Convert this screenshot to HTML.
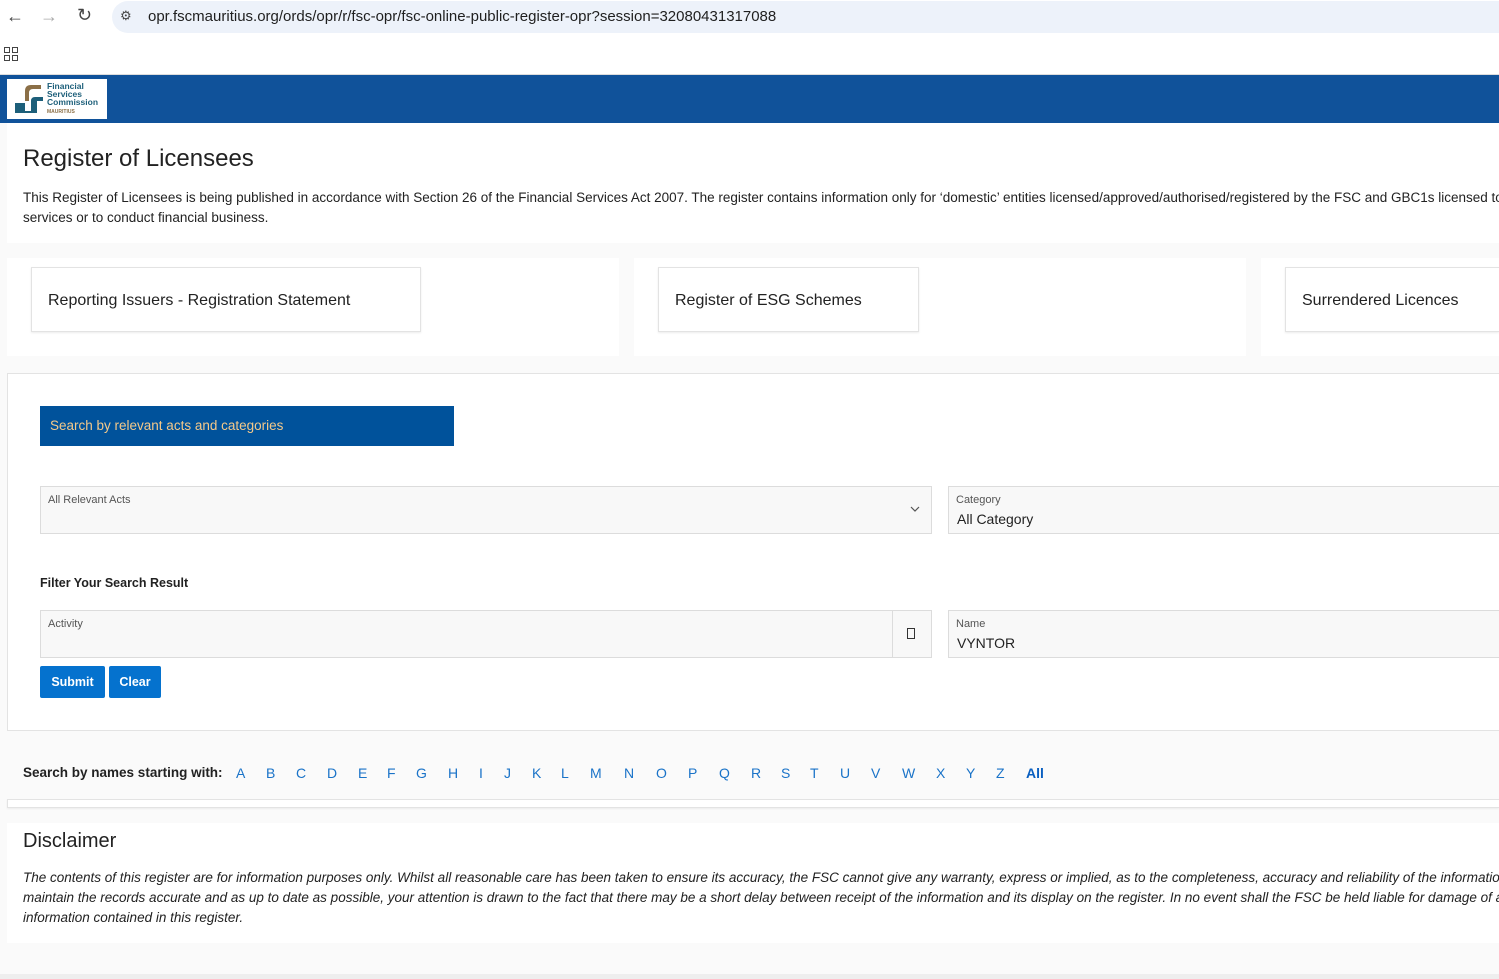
<!DOCTYPE html>
<html><head><meta charset="utf-8"><style>
*{box-sizing:border-box;margin:0;padding:0}
html,body{width:1499px;height:979px;overflow:hidden}
body{background:#fafafa;font-family:"Liberation Sans",sans-serif;color:#222}
#w{position:relative;width:1499px;height:979px;overflow:hidden}
.a{position:absolute}
.chrome{left:0;top:0;width:1499px;height:75px;background:#fff;border-bottom:1px solid #ddd}
.url{left:112px;top:1px;width:1387px;height:32px;background:#edf2fa;border-radius:16px 0 0 16px}
.urltxt{left:148px;top:8px;font-size:15px;color:#1f1f1f}
.hdr{left:0;top:75px;width:1499px;height:48px;background:#10529a}
.logo{left:7px;top:79px;width:100px;height:40px;background:#fff}
.panel{background:#fff}
.card{background:#fff;border:1px solid #e3e3e3;box-shadow:0 1px 2px rgba(0,0,0,.08);font-size:16px;color:#222;padding:24px 16px;white-space:nowrap;overflow:hidden}
.field{background:#f8f8f8;border:1px solid #dcdcdc}
.lbl{font-size:11px;color:#555}
.btn{background:#0572ce;color:#fff;font-weight:bold;font-size:12.5px;text-align:center;line-height:32px;border-radius:2px}
.ltr{top:765px;font-size:14px;color:#1a73c8}
.clip{overflow:hidden;white-space:nowrap}
</style></head><body><div id="w">
<div class="a chrome"></div>
<div class="a url"></div>
<div class="a" style="left:6px;top:6px;font-size:18px;color:#444">←</div>
<div class="a" style="left:40px;top:6px;font-size:18px;color:#aaa">→</div>
<div class="a" style="left:77px;top:5px;font-size:18px;color:#444">↻</div>
<div class="a" style="left:120px;top:8px;font-size:13px;color:#444">⚙</div>
<div class="a urltxt">opr.fscmauritius.org/ords/opr/r/fsc-opr/fsc-online-public-register-opr?session=32080431317088</div>
<svg class="a" style="left:4px;top:47px" width="14" height="14"><rect x="0.5" y="0.5" width="5" height="5" fill="none" stroke="#444"/><rect x="8.5" y="0.5" width="5" height="5" fill="none" stroke="#444"/><rect x="0.5" y="8.5" width="5" height="5" fill="none" stroke="#444"/><rect x="8.5" y="8.5" width="5" height="5" fill="none" stroke="#444"/></svg>
<div class="a hdr"></div>
<div class="a logo">
<svg width="34" height="36" style="position:absolute;left:6px;top:2px"><path d="M4 20h8v-10q0-6 6-6h10v4h-8q-4 0-4 4v8h-4" fill="#8b6f47"/><path d="M2 22h10v8h6v-10q0-4 4-4h8v4h-6v12h-22z" fill="#1d5f7a"/></svg>
<div style="position:absolute;left:40px;top:3px;font-size:8.5px;line-height:8px;color:#1d5f7a;font-weight:bold">Financial<br>Services<br>Commission</div>
<div style="position:absolute;left:40px;top:30px;font-size:5px;color:#8b6f47;font-weight:bold">MAURITIUS</div>
</div>
<div class="a panel" style="left:7px;top:123px;width:1492px;height:120px"></div>
<div class="a" style="left:23px;top:145px;font-size:24px;color:#222">Register of Licensees</div>
<div class="a clip" style="left:23px;top:188px;width:1476px;font-size:13.5px;line-height:20px;color:#222">This Register of Licensees is being published in accordance with Section 26 of the Financial Services Act 2007. The register contains information only for ‘domestic’ entities licensed/approved/authorised/registered by the FSC and GBC1s licensed to conduct<br>services or to conduct financial business.</div>
<div class="a panel" style="left:7px;top:258px;width:612px;height:98px"></div>
<div class="a panel" style="left:634px;top:258px;width:612px;height:98px"></div>
<div class="a panel" style="left:1261px;top:258px;width:238px;height:98px"></div>
<div class="a card" style="left:31px;top:267px;width:390px;height:65px">Reporting Issuers - Registration Statement</div>
<div class="a card" style="left:658px;top:267px;width:261px;height:65px">Register of ESG Schemes</div>
<div class="a card" style="left:1285px;top:267px;width:214px;height:65px;border-right:none">Surrendered Licences</div>
<div class="a panel" style="left:7px;top:373px;width:1492px;height:358px;border:1px solid #e3e3e3;border-right:none"></div>
<div class="a" style="left:40px;top:406px;width:414px;height:40px;background:#00529b;color:#f4c98a;font-size:13.5px;line-height:40px;padding-left:10px">Search by relevant acts and categories</div>
<div class="a field" style="left:40px;top:486px;width:892px;height:48px"></div>
<div class="a lbl" style="left:48px;top:494px">All Relevant Acts</div>
<svg class="a" style="left:910px;top:506px" width="10" height="7"><path d="M1 1l4 4 4-4" fill="none" stroke="#555" stroke-width="1.2"/></svg>
<div class="a field" style="left:948px;top:486px;width:551px;height:48px;border-right:none"></div>
<div class="a lbl" style="left:956px;top:494px">Category</div>
<div class="a" style="left:957px;top:511px;font-size:14px">All Category</div>
<div class="a" style="left:40px;top:576px;font-size:12.5px;font-weight:bold;color:#222">Filter Your Search Result</div>
<div class="a field" style="left:40px;top:610px;width:892px;height:48px"></div>
<div class="a" style="left:892px;top:610px;width:1px;height:48px;background:#dcdcdc"></div>
<div class="a" style="left:907px;top:628px;width:8px;height:11px;border:1px solid #333"></div>
<div class="a lbl" style="left:48px;top:618px">Activity</div>
<div class="a field" style="left:948px;top:610px;width:551px;height:48px;border-right:none"></div>
<div class="a lbl" style="left:956px;top:618px">Name</div>
<div class="a" style="left:957px;top:635px;font-size:14px">VYNTOR</div>
<div class="a btn" style="left:40px;top:666px;width:65px;height:32px">Submit</div>
<div class="a btn" style="left:109px;top:666px;width:52px;height:32px">Clear</div>
<div class="a" style="left:23px;top:765px;font-size:13.5px;font-weight:bold">Search by names starting with:</div>
<div class="a ltr" style="left:236px">A</div><div class="a ltr" style="left:266px">B</div><div class="a ltr" style="left:296px">C</div><div class="a ltr" style="left:327px">D</div><div class="a ltr" style="left:358px">E</div><div class="a ltr" style="left:387px">F</div><div class="a ltr" style="left:416px">G</div><div class="a ltr" style="left:448px">H</div><div class="a ltr" style="left:479px">I</div><div class="a ltr" style="left:504px">J</div><div class="a ltr" style="left:532px">K</div><div class="a ltr" style="left:561px">L</div><div class="a ltr" style="left:590px">M</div><div class="a ltr" style="left:624px">N</div><div class="a ltr" style="left:656px">O</div><div class="a ltr" style="left:688px">P</div><div class="a ltr" style="left:719px">Q</div><div class="a ltr" style="left:751px">R</div><div class="a ltr" style="left:781px">S</div><div class="a ltr" style="left:810px">T</div><div class="a ltr" style="left:840px">U</div><div class="a ltr" style="left:871px">V</div><div class="a ltr" style="left:902px">W</div><div class="a ltr" style="left:936px">X</div><div class="a ltr" style="left:966px">Y</div><div class="a ltr" style="left:996px">Z</div><div class="a ltr" style="left:1026px;font-weight:bold;color:#0a5fc0">All</div>
<div class="a panel" style="left:7px;top:799px;width:1492px;height:9px;border:1px solid #e3e3e3;border-right:none;box-shadow:0 1px 2px rgba(0,0,0,.06)"></div>
<div class="a panel" style="left:7px;top:823px;width:1492px;height:120px"></div>
<div class="a" style="left:23px;top:830px;font-size:20px">Disclaimer</div>
<div class="a clip" style="left:23px;top:868px;width:1476px;font-size:13.5px;line-height:20px;font-style:italic">The contents of this register are for information purposes only. Whilst all reasonable care has been taken to ensure its accuracy, the FSC cannot give any warranty, express or implied, as to the completeness, accuracy and reliability of the information. While the FSC<br>maintain the records accurate and as up to date as possible, your attention is drawn to the fact that there may be a short delay between receipt of the information and its display on the register. In no event shall the FSC be held liable for damage of any nature<br>information contained in this register.</div>
<div class="a" style="left:0;top:974px;width:1499px;height:5px;background:#eee"></div>
</div></body></html>
